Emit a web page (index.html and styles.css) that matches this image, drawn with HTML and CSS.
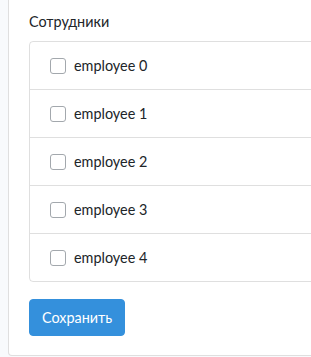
FILE: index.html
```html
<!DOCTYPE html>
<html lang="ru">
<head>
<meta charset="utf-8">
<title>Сотрудники</title>
<link rel="stylesheet" href="styles.css">
</head>
<body>
<div class="page">
  <div class="card">
    <div class="card-body">
      <div class="label">Сотрудники</div>
      <ul class="list">
        <li class="item"><label class="check"><span class="box"></span><span>employee 0</span></label></li>
        <li class="item"><label class="check"><span class="box"></span><span>employee 1</span></label></li>
        <li class="item"><label class="check"><span class="box"></span><span>employee 2</span></label></li>
        <li class="item"><label class="check"><span class="box"></span><span>employee 3</span></label></li>
        <li class="item"><label class="check"><span class="box"></span><span>employee 4</span></label></li>
      </ul>
      <button class="btn" type="button">Сохранить</button>
    </div>
  </div>
</div>
</body>
</html>
```
FILE: styles.css
```css
html, body {
  margin: 0;
  padding: 0;
  background: #f8fafc;
}
body {
  font-family: Lato, "Noto Sans", sans-serif;
  font-size: 14.4px;
  line-height: 23px;
  color: #212529;
}
.page {
  padding-left: 8px;
  overflow: hidden;
}
.card {
  margin-right: -40px;
  background: #fff;
  border: 1px solid rgba(0, 0, 0, 0.125);
  border-top: none;
  border-radius: 0 0 4px 4px;
}
.card-body {
  padding: 10px 20px 19px 20px;
}
.label {
  margin-bottom: 8px;
}
.list {
  list-style: none;
  margin: 0 0 17px 0;
  padding: 0;
  border: 1px solid rgba(0, 0, 0, 0.125);
  border-radius: 4px;
}
.item {
  padding: 12px 20px;
  border-top: 1px solid rgba(0, 0, 0, 0.125);
  height: 23px;
}
.item:first-child {
  border-top: none;
}
.check {
  display: flex;
  align-items: center;
  gap: 8px;
}
.box {
  width: 14px;
  height: 14px;
  border: 1px solid #a3a8ad;
  border-radius: 3px;
  background: #fff;
  margin-top: 1px;
}
.btn {
  font-family: inherit;
  font-size: 14.4px;
  line-height: 23px;
  color: #fff;
  background: #3490dc;
  border: 1px solid #3490dc;
  border-radius: 4px;
  padding: 6px 12px;
  display: block;
}
```
